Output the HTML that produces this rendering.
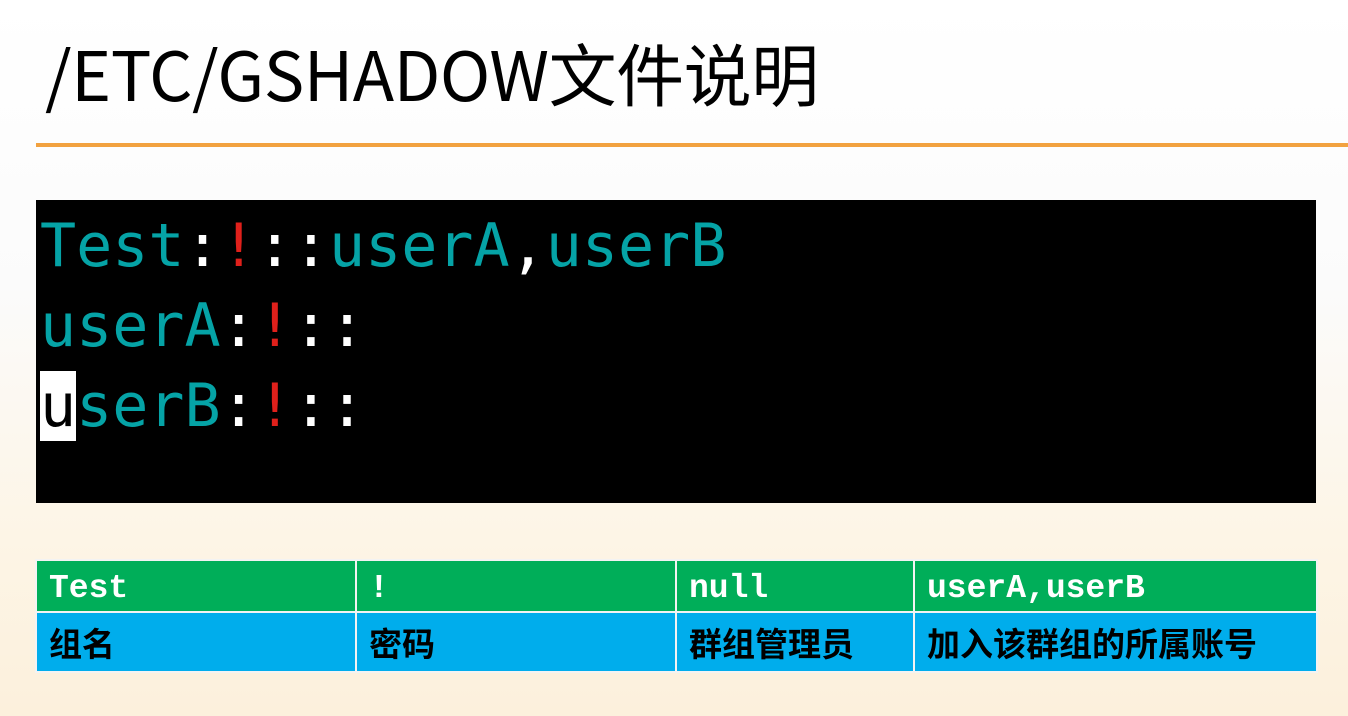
<!DOCTYPE html>
<html><head><meta charset="utf-8"><style>
html,body{margin:0;padding:0}
body{width:1348px;height:716px;position:relative;overflow:hidden;
background:linear-gradient(to bottom,#ffffff 0%,#fbfbfb 40%,#fdf5e6 75%,#fcf0dc 100%);
font-family:"Liberation Sans","Noto Sans CJK SC",sans-serif}
.title{position:absolute;left:45px;top:27px;font-family:"Noto Sans CJK SC",sans-serif;font-size:68px;line-height:90px;color:#000;white-space:nowrap;transform-origin:0 0;transform:scaleX(1.0);letter-spacing:-0.5px}
.line{position:absolute;left:36px;top:143px;width:1312px;height:4px;background:#f2a240}
.term{position:absolute;left:36px;top:200px;width:1280px;height:303px;background:#000}
.t{position:absolute;left:4px;font-family:"DejaVu Sans Mono","Liberation Mono",monospace;font-size:60px;line-height:80px;color:#05a3a6;white-space:pre;transform-origin:0 0;transform:scaleX(1.0)}
.r{color:#e0201b}.w{color:#fff}
.cur{background:#fff;color:#000}
table{position:absolute;left:35px;top:559px;border-collapse:collapse;table-layout:fixed;width:1281px}
td{border:2px solid #f3f3f3;padding:0 12px;font-weight:bold;white-space:nowrap;overflow:hidden}
tr.g td{background:#00ae59;color:#fff;height:52px;padding-top:4px;box-sizing:border-box;font-family:"Liberation Mono",monospace;font-size:33px}
tr.b td{background:#00adec;color:#000;height:58px;font-family:"Noto Sans CJK SC",sans-serif;font-size:33px}
</style></head><body>
<div class="title">/ETC/GSHADOW文件说明</div>
<div class="line"></div>
<div class="term">
<div class="t" style="top:6px">Test<span class="w">:</span><span class="r">!</span><span class="w">::</span>userA<span class="w">,</span>userB</div>
<div class="t" style="top:86px">userA<span class="w">:</span><span class="r">!</span><span class="w">::</span></div>
<div class="t" style="top:166px"><span class="cur">u</span>serB<span class="w">:</span><span class="r">!</span><span class="w">::</span></div>
</div>
<table>
<colgroup><col style="width:320px"><col style="width:320px"><col style="width:238px"><col style="width:403px"></colgroup>
<tr class="g"><td>Test</td><td>!</td><td>null</td><td>userA,userB</td></tr>
<tr class="b"><td>组名</td><td>密码</td><td>群组管理员</td><td>加入该群组的所属账号</td></tr>
</table>
</body></html>
